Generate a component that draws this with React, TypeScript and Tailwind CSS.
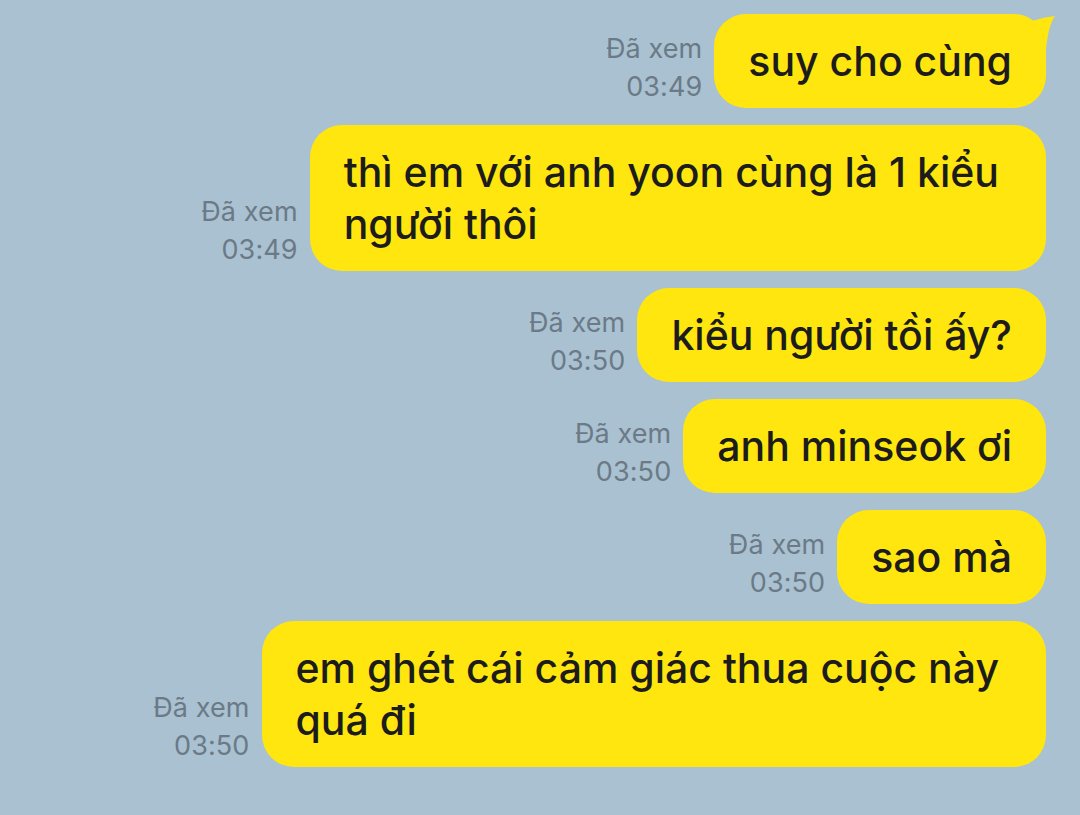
import React from "react";

type Msg = { lines: string[]; time: string; tail?: boolean };

const msgs: Msg[] = [
  { lines: ["suy cho cùng"], time: "03:49", tail: true },
  { lines: ["thì em với anh yoon cùng là 1 kiểu", "người thôi"], time: "03:49" },
  { lines: ["kiểu người tồi ấy?"], time: "03:50" },
  { lines: ["anh minseok ơi"], time: "03:50" },
  { lines: ["sao mà"], time: "03:50" },
  { lines: ["em ghét cái cảm giác thua cuộc này", "quá đi"], time: "03:50" },
];

export default function App() {
  return (
    <div
      className="w-[1080px] h-[815px] bg-[#a9c1d1] overflow-hidden flex flex-col items-end gap-[17px] pt-[14px] pr-[34px]"
      style={{ fontFamily: "Inter, 'Noto Sans', sans-serif" }}
    >
      {msgs.map((m, i) => (
        <div key={i} className="flex items-end gap-[12px]">
          <div className="flex flex-col items-end text-[#6b7a86] text-[27px] leading-[38px] tracking-[0.1px] mb-[2px]">
            <span>Đã xem</span>
            <span>{m.time}</span>
          </div>
          <div
            className={
              "relative bg-[#fee60e] rounded-[32px] pl-[34px] py-[21px] text-[#1c1c1c] text-[41px] leading-[52px] font-medium whitespace-nowrap " +
              (m.lines.length > 1 ? "pr-[47px]" : "pr-[34px]")
            }
          >
            {m.tail && (
              <svg
                className="absolute right-[-14px] top-0"
                width="50"
                height="50"
                viewBox="0 0 50 50"
              >
                <path d="M16 6 Q20 6 22 7 Q34 3 45 2 Q38 12 36 36 L16 36 Z" fill="#fee60e" />
              </svg>
            )}
            {m.lines.map((l, j) => (
              <div key={j} className="relative">{l}</div>
            ))}
          </div>
        </div>
      ))}
    </div>
  );
}
